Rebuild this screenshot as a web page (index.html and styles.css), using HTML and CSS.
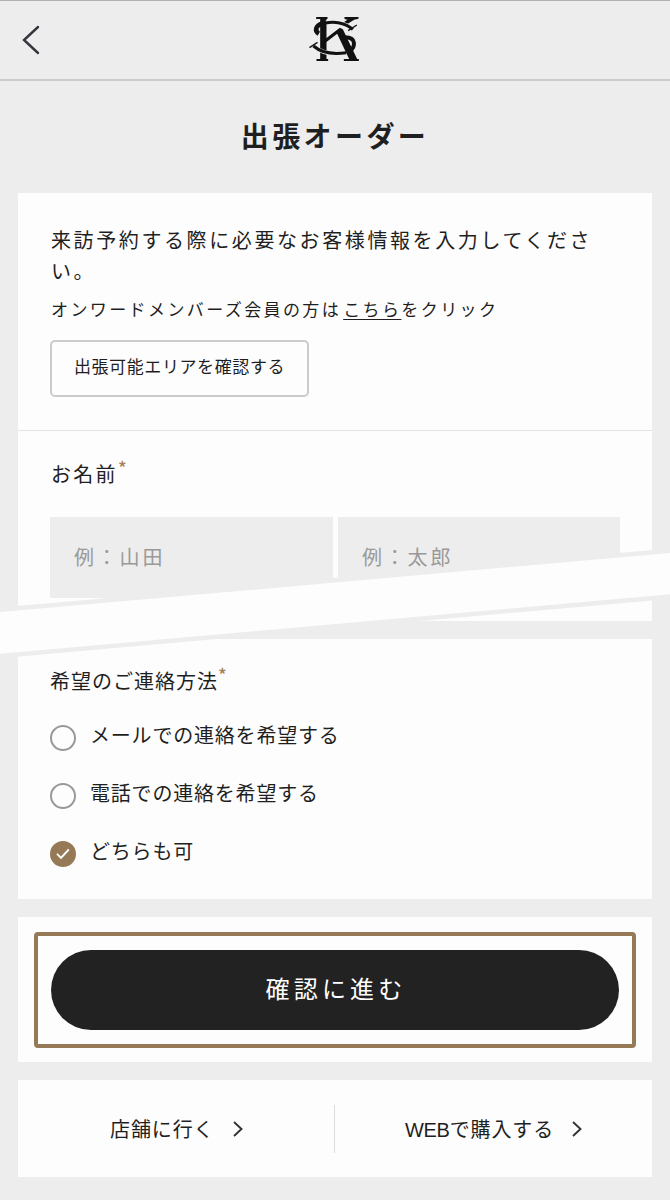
FILE: index.html
```html
<!DOCTYPE html>
<html lang="ja">
<head>
<meta charset="utf-8">
<title>出張オーダー</title>
<link rel="stylesheet" href="styles.css">
</head>
<body>
<header class="header">
  <svg class="back" viewBox="0 0 18 30" fill="none" stroke="#33373b" stroke-width="2.4" stroke-linecap="round" stroke-linejoin="miter"><path d="M16 2 L2 15 L16 28"/></svg>
  <svg class="logo" viewBox="40 30 155 141">
    <g fill="none" stroke="#111">
      <path d="M72 86 C58 78 63 60 82 56" stroke-width="14"/>
      <path d="M150 97 C186 97 182 126 164 139" stroke-width="12"/>
    </g>
    <path d="M132 84 L172 161" fill="none" stroke="#ededed" stroke-width="24"/>
    <path d="M76 42h19v122H76z" fill="#111"/>
    <path d="M56 124 C80 144 112 149 152 143" fill="none" stroke="#ededed" stroke-width="13"/>
    <path d="M56 123 C80 144 112 149 154 143" fill="none" stroke="#111" stroke-width="9"/>
    <g fill="#111">
      <path d="M64 36h34v6H64zM65 162h35v6H65zM147 162h45v6h-45z"/>
      <path d="M92 101 L135 68 L144 73 L188 164 H164 L127 86 L92 113Z"/>
      <path d="M149 36h42v5l-13 3-24 15-12-4 16-11-9-2z"/>
    </g>
    <path d="M94 53 C118 47 151 53 174 73" fill="none" stroke="#ededed" stroke-width="13"/>
    <path d="M92 54 C118 48 151 53 174 73" fill="none" stroke="#111" stroke-width="9"/>
    <path d="M44 128 L68 112 M160 77 L186 60" fill="none" stroke="#111" stroke-width="4"/>
  </svg>
</header>

<main class="main">
  <h1 class="title">出張オーダー</h1>

  <section class="card intro">
    <div class="intro-body">
      <p class="lead">来訪予約する際に必要なお客様情報を入力してください。</p>
      <p class="note">オンワードメンバーズ会員の方は<a class="link">こちら</a>をクリック</p>
      <button class="area-button">出張可能エリアを確認する</button>
    </div>
    <div class="name-body">
      <h2 class="label name-label">お名前<span class="required">*</span></h2>
      <div class="fields">
        <div class="field">例：山田</div>
        <div class="field">例：太郎</div>
      </div>
    </div>
  </section>

  <section class="card contact">
    <h2 class="label contact-label">希望のご連絡方法<span class="required">*</span></h2>
    <div class="options">
      <div class="option"><span class="radio"></span><span class="option-text">メールでの連絡を希望する</span></div>
      <div class="option"><span class="radio"></span><span class="option-text">電話での連絡を希望する</span></div>
      <div class="option"><span class="radio checked"><svg class="check" viewBox="0 0 14 12" fill="none" stroke="#fff" stroke-width="1.9" stroke-linecap="round"><path d="M1.5 6.3 L5 9.8 L12.3 2"/></svg></span><span class="option-text">どちらも可</span></div>
    </div>
  </section>

  <section class="card submit">
    <div class="submit-frame"><button class="submit-button">確認に進む</button></div>
  </section>

  <nav class="card links">
    <a class="nav-link visit">店舗に行く<svg class="chevron" viewBox="0 0 10 16" fill="none" stroke="#333" stroke-width="1.9"><path d="M1 1 L8.5 8 L1 15"/></svg></a>
    <span class="divider"></span>
    <a class="nav-link web"><span><span class="latin">WEB</span>で購入する</span><svg class="chevron" viewBox="0 0 10 16" fill="none" stroke="#333" stroke-width="1.9"><path d="M1 1 L8.5 8 L1 15"/></svg></a>
  </nav>
</main>

<svg class="tear" viewBox="0 0 670 120"><polygon points="-20,73.8 690,11.2 690,52.6 -20,115.4" fill="#fdfdfd" stroke="#ededed" stroke-width="9" paint-order="stroke"/></svg>
</body>
</html>
```
FILE: styles.css
```css
* { box-sizing: border-box; }

body {
  position: relative;
  width: 670px;
  height: 1200px;
  margin: 0;
  overflow: hidden;
  background: #ededed;
  color: #1f1f1f;
  font-family: "Noto Sans CJK JP", sans-serif;
}

h1, h2, p { margin: 0; font-weight: 400; }

button {
  padding: 0;
  color: inherit;
  font-family: inherit;
}

.header {
  display: flex;
  align-items: flex-start;
  height: 81px;
  padding-left: 22px;
  border-top: 1px solid #b0b0b0;
  border-bottom: 2px solid #cbcbcb;
}

.back { width: 18px; height: 30px; margin-top: 24px; }
.logo { width: 52px; height: 47px; margin: 14px 0 0 268px; }

.main { padding: 0 18px; }

.title {
  height: 112px;
  padding-top: 33px;
  font-size: 28px;
  font-weight: 700;
  letter-spacing: 3.4px;
  line-height: 42px;
  text-align: center;
}

.card { background: #fdfdfd; margin-bottom: 18px; }

.intro { height: 428px; }

.intro-body {
  height: 238px;
  padding: 32px 34px 0 33px;
  border-bottom: 1px solid #e4e4e4;
}

.lead { font-size: 20px; letter-spacing: 2.6px; line-height: 30.5px; width: 560px; }
.note { margin-top: 9px; font-size: 17px; letter-spacing: 2.4px; line-height: 28px; }

.link {
  margin-left: 2px;
  text-decoration: underline;
  text-decoration-thickness: 1px;
  text-underline-offset: 3px;
}

.area-button {
  display: block;
  width: 259px;
  height: 57px;
  margin: 17px 0 0 -1px;
  padding-bottom: 7px;
  background: transparent;
  border: 2px solid #cbcbcb;
  border-radius: 5px;
  font-size: 17px;
  letter-spacing: 0.6px;
}

.name-body { padding: 28px 32px 0; }

.label {
  display: flex;
  align-items: flex-start;
  font-size: 20px;
  line-height: 30px;
}

.name-label { padding-left: 1px; letter-spacing: 2.3px; }

.required {
  color: #a58256;
  font-size: 18px;
  font-weight: 500;
  letter-spacing: 0;
  line-height: 17px;
}

.fields { display: grid; grid-template-columns: 283px 282px; gap: 5px; margin-top: 28px; }

.field {
  height: 81px;
  padding-left: 24px;
  background: #ededed;
  color: #999;
  font-size: 20px;
  letter-spacing: 2.8px;
  line-height: 80px;
}

.contact { height: 260px; padding: 27px 34px 0 32px; }
.contact-label { letter-spacing: 1px; }
.options { display: grid; gap: 28px; margin-top: 25px; }
.option { display: flex; align-items: center; gap: 14px; height: 30px; }

.option-text {
  padding-bottom: 2px;
  font-size: 20px;
  letter-spacing: 0.8px;
  line-height: 26px;
}

.radio {
  display: flex;
  align-items: center;
  justify-content: center;
  width: 26px;
  height: 26px;
  margin-top: 4px;
  border: 2px solid #999;
  border-radius: 50%;
}

.checked { background: #967a57; border-color: #967a57; }
.check { width: 14px; height: 12px; }

.submit { height: 145px; padding: 15px 16px 0; }

.submit-frame {
  height: 116px;
  padding: 14px 13px;
  border: 4px solid #967a57;
  border-radius: 4px;
}

.submit-button {
  display: block;
  width: 100%;
  height: 80px;
  padding-bottom: 6px;
  padding-left: 2px;
  background: #222;
  border: 0;
  border-radius: 40px;
  color: #fff;
  font-size: 24px;
  letter-spacing: 4.2px;
}

.links {
  display: flex;
  align-items: center;
  height: 97px;
}

.nav-link {
  display: flex;
  align-items: center;
  font-size: 20px;
  letter-spacing: 0.9px;
  line-height: 30px;
}

.visit { width: 316px; padding-left: 92px; }
.web { padding-top: 1px; padding-left: 70px; }
.latin { font-family: "Liberation Sans", sans-serif; letter-spacing: -0.3px; }
.divider { width: 1px; height: 48px; background: #ddd; }
.chevron { width: 10px; height: 16px; margin-left: 18px; }

.tear {
  position: absolute;
  top: 540px;
  left: 0;
  width: 670px;
  height: 120px;
}
```
